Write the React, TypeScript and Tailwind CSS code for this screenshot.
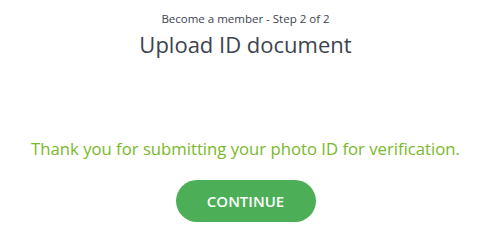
export default function App() {
  return (
    <div className="flex h-[242px] w-[491px] flex-col items-center bg-white font-['Open_Sans',sans-serif]">
      <p className="mt-[12px] text-[11.5px] leading-[14px] text-[#3d4350]">
        Become a member - Step 2 of 2
      </p>
      <h1 className="mt-[4px] text-[22px] leading-[28px] text-[#3d4350]">
        Upload ID document
      </h1>
      <p className="mt-[81px] text-[16.7px] leading-[20px] text-[#7ab829]">
        Thank you for submitting your photo ID for verification.
      </p>
      <button className="mt-[21px] h-[42px] w-[140px] rounded-full bg-[#4caf57] text-[15px] font-semibold text-white">
        CONTINUE
      </button>
    </div>
  );
}
